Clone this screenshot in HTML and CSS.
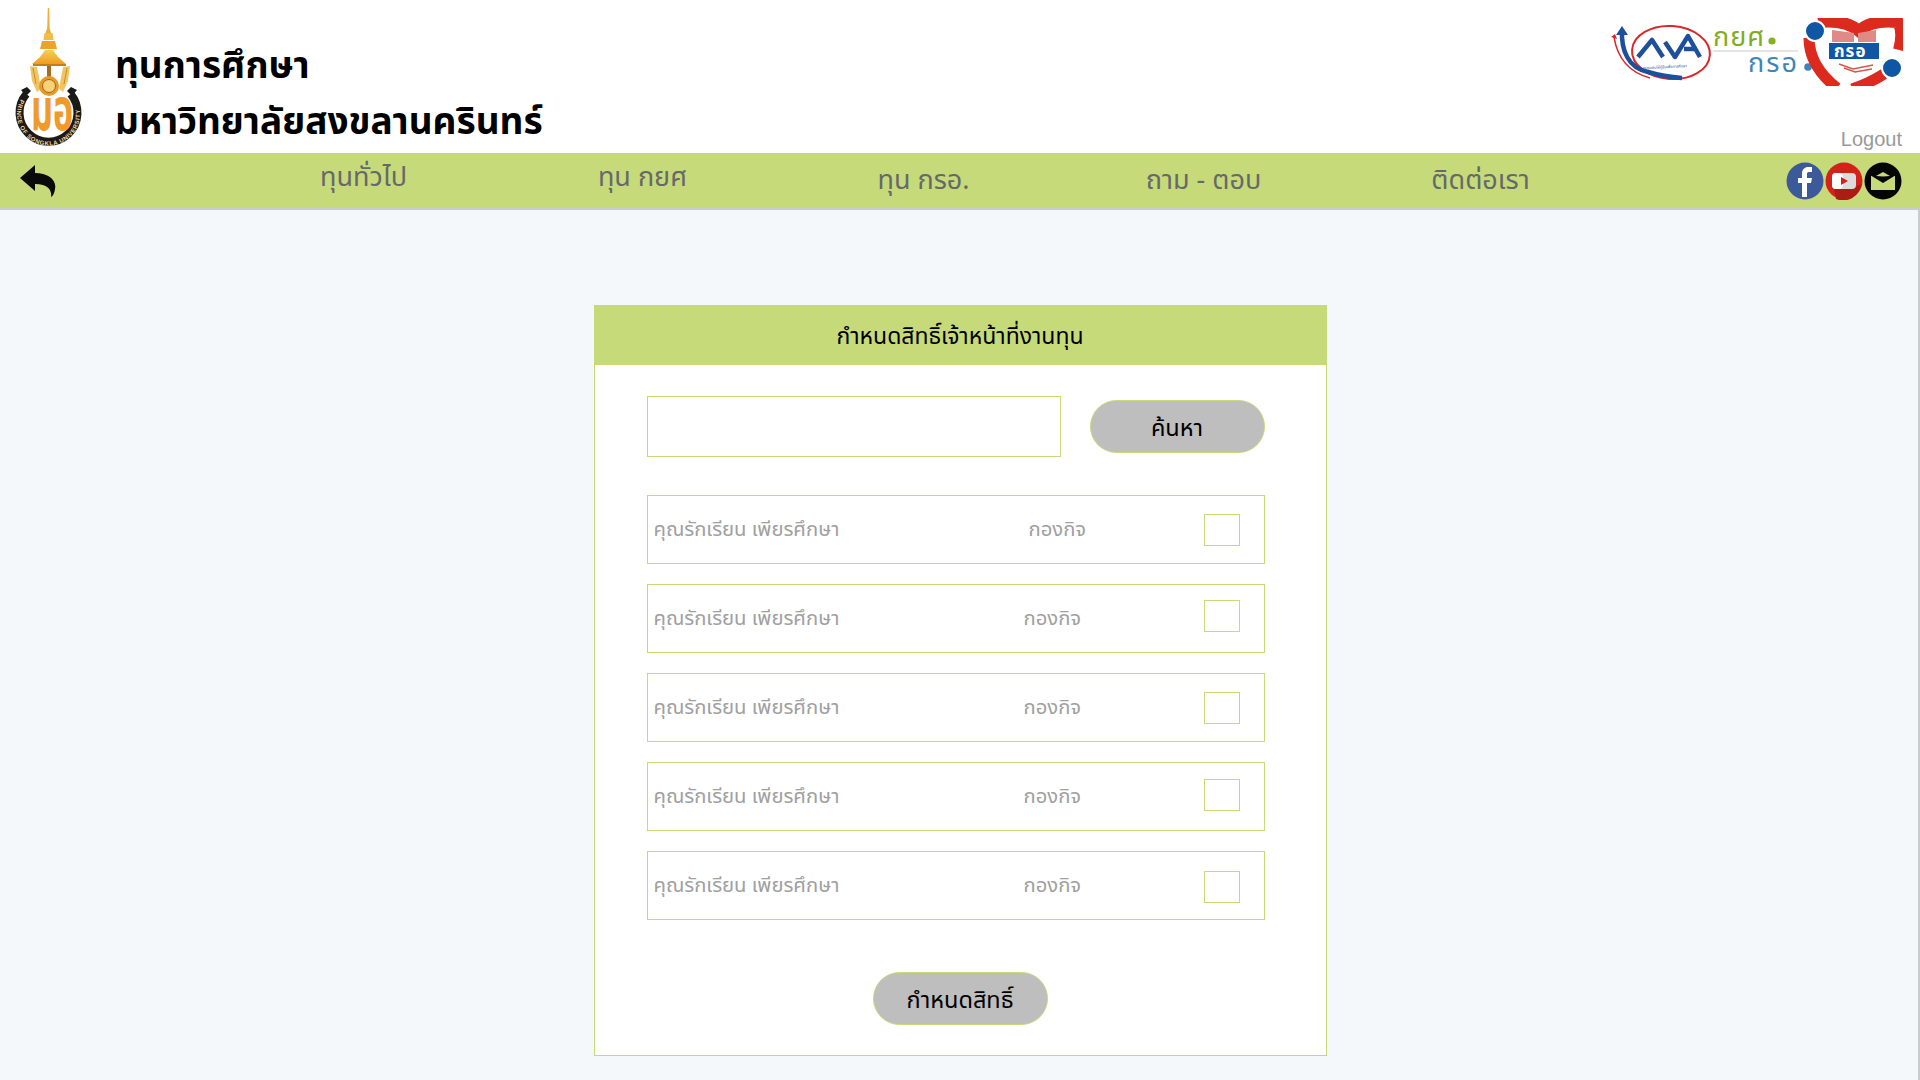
FILE: index.html
```html
<!DOCTYPE html>
<html lang="th">
<head>
<meta charset="utf-8">
<title>ทุนการศึกษา</title>
<link rel="stylesheet" href="styles.css">
</head>
<body>
<header class="top">
  <svg class="crest" viewBox="0 0 100 152" width="100" height="152" aria-hidden="true">
    <defs>
      <linearGradient id="gold" x1="0" y1="0" x2="0" y2="1"><stop offset="0" stop-color="#f7cf5a"/><stop offset="1" stop-color="#ef9d1e"/></linearGradient>
      <path id="ringArc" d="M22 97 A31.500 31.500 0 1 0 75 97"/>
    </defs>
    <path d="M47.800 8h1.400l.5 20 1.500 6 1 6h-8l1-6 2-6z" fill="#eab040"/>
    <path d="M44.500 33h8l1 7h-10z" fill="#f2bd44"/>
    <path d="M42 41h13l2 8H40z" fill="#e9a42a"/>
    <path d="M45 50h8l5 7 8 7H32l8-7z" fill="url(#gold)"/>
    <rect x="33" y="64" width="33" height="2" fill="#c77d18"/>
    <path d="M30 66l7 1 2 10 2 12-4 3-5-11zM70 66l-7 1-2 10-2 12 4 3 5-11z" fill="#f0c665"/>
    <path d="M33 68l3 16M67 68l-3 16" stroke="#c98a2a" fill="none"/>
    <rect x="47" y="66" width="4" height="11" fill="#a96c1c"/>
    <circle cx="49" cy="86" r="10" fill="#e89a24"/>
    <circle cx="49" cy="86" r="6.500" fill="#f6d27a" stroke="#a9641a"/>
    <path d="M26.300 94 A29 29 0 1 0 70.700 94" fill="none" stroke="#1b1a17" stroke-width="8"/>
    <path d="M21 90l6-3 4 4-5 5zM77 90l-6-3-4 4 5 5z" fill="#1b1a17"/>
    <text class="ring-text"><textPath href="#ringArc" startOffset="2%">PRINCE OF SONGKLA UNIVERSITY</textPath></text>
    <text class="crest-mark" transform="translate(31 130) scale(1 1.700)">มอ</text>
  </svg>
  <h1 class="brand">ทุนการศึกษา<br>มหาวิทยาลัยสงขลานครินทร์</h1>
  <div class="top-right">
    <svg class="partners" viewBox="0 0 293 68" width="293" height="68" aria-hidden="true">
      <g fill="none">
        <ellipse cx="61" cy="34.500" rx="39" ry="26.500" stroke="#d9282a" stroke-width="2" transform="rotate(4 61 34)"/>
        <path d="M12 12C11 32 18 50 38 54C48 57 58 59 72 60" stroke="#1d4f9c" stroke-width="4.500"/>
        <path d="M4 19C7 38 18 54 40 60" stroke="#d9282a" stroke-width="1.600"/>
        <path d="M28 39L42 22L53 39M55 24L65 39L78 18L90 39M74 31H87" stroke="#1d4f9c" stroke-width="4.500" stroke-linejoin="round"/>
      </g>
      <path d="M12 8l6 9h-12z" fill="#1d4f9c"/>
      <path d="M1 19l4-3 2 5z" fill="#d9282a"/>
      <text class="fund-small" x="30" y="50" transform="rotate(-3 60 48)">กองทุนเงินให้กู้ยืมเพื่อการศึกษา</text>
      <text class="mark-green" x="103" y="28">กยศ</text>
      <circle cx="162" cy="23" r="3.600" fill="#86b020"/>
      <rect x="103" y="32" width="85" height="2" fill="#e3e5e5"/>
      <text class="mark-blue" x="138" y="54">กรอ</text>
      <circle cx="198" cy="49" r="3.800" fill="#3f86b8"/>
      <g fill="none" stroke="#dc2a1e" stroke-width="12">
        <path d="M208 4Q235 1 249 13Q262 1 288 4Q294 14 289 32"/>
      </g>
      <g fill="none" stroke="#dc2a1e" stroke-width="11">
        <path d="M199 20Q199 48 227 70"/>
        <path d="M274 56Q258 66 242 71"/>
      </g>
      <path d="M222 12l22 3v9h-22zM248 15l18-3v12h-18z" fill="#e08a85"/>
      <rect x="219" y="25" width="50" height="16" fill="#0f56a5"/>
      <text class="mark-inner" x="224" y="39">กรอ</text>
      <path d="M229 46l14 5 20-4M234 50l11 4 17-3" fill="none" stroke="#d9564a" stroke-width="1.400"/>
      <circle cx="205" cy="13" r="10" fill="#0f56a5" stroke="#fff" stroke-width="2"/>
      <circle cx="282" cy="50" r="10" fill="#0f56a5" stroke="#fff" stroke-width="2"/>
    </svg>
    <a class="logout">Logout</a>
  </div>
</header>

<nav class="nav">
  <svg class="back" viewBox="0 0 36 32" width="36" height="32" aria-hidden="true">
    <path d="M0 13L15 0V8C28 8 37 15 35 24C34.500 28 33 31 31 32C32 26 29 19 15 19V26z" fill="#0a0a0a"/>
  </svg>
  <ul class="links">
    <li class="link raised">ทุนทั่วไป</li>
    <li class="link raised">ทุน กยศ</li>
    <li class="link">ทุน กรอ.</li>
    <li class="link">ถาม - ตอบ</li>
    <li class="link">ติดต่อเรา</li>
  </ul>
  <div class="social">
    <svg viewBox="0 0 38 38" width="38" height="38" aria-hidden="true">
      <circle cx="19" cy="19" r="18.500" fill="#3c5a9a"/>
      <path d="M16 35V21h-4v-5h4v-4c0-5 3-7 6-7h4v5h-3c-1.500 0-2 .7-2 2v4h5l-1 5h-4v14z" fill="#fff"/>
    </svg>
    <svg viewBox="0 0 38 38" width="38" height="38" aria-hidden="true">
      <circle cx="19" cy="19" r="18.500" fill="#d2221c"/>
      <path d="M9 26h20l7-4a18 18 0 0 1-25 15z" fill="#ab1c16"/>
      <rect x="7" y="11" width="24" height="16" rx="4" fill="#dcdcdc"/>
      <rect x="7" y="11" width="11" height="16" rx="4" fill="#fff"/>
      <path d="M16 15l7 4-7 4z" fill="#d2221c"/>
    </svg>
    <svg viewBox="0 0 38 38" width="38" height="38" aria-hidden="true">
      <circle cx="19" cy="19" r="18.500" fill="#050505"/>
      <path d="M7 14L19 7l12 7v14H7z" fill="#c7da79"/>
      <path d="M6 13L19 6l13 7-13 8z" fill="#050505"/>
      <path d="M12 14l7-4 7 4-7 .5z" fill="#c7da79"/>
    </svg>
  </div>
</nav>

<main class="page">
  <section class="card">
    <h2 class="card-title">กำหนดสิทธิ์เจ้าหน้าที่งานทุน</h2>
    <div class="card-body">
      <div class="search">
        <input class="search-box" type="text" aria-label="ค้นหา">
        <button class="pill" type="button">ค้นหา</button>
      </div>
      <div class="row">
        <span class="name">คุณรักเรียน เพียรศึกษา</span>
        <span class="unit first">กองกิจ</span>
        <input class="tick" type="checkbox">
      </div>
      <div class="row high">
        <span class="name">คุณรักเรียน เพียรศึกษา</span>
        <span class="unit">กองกิจ</span>
        <input class="tick" type="checkbox">
      </div>
      <div class="row">
        <span class="name">คุณรักเรียน เพียรศึกษา</span>
        <span class="unit">กองกิจ</span>
        <input class="tick" type="checkbox">
      </div>
      <div class="row mid">
        <span class="name">คุณรักเรียน เพียรศึกษา</span>
        <span class="unit">กองกิจ</span>
        <input class="tick" type="checkbox">
      </div>
      <div class="row low">
        <span class="name">คุณรักเรียน เพียรศึกษา</span>
        <span class="unit">กองกิจ</span>
        <input class="tick" type="checkbox">
      </div>
      <div class="actions">
        <button class="pill" type="button">กำหนดสิทธิ์</button>
      </div>
    </div>
  </section>
</main>
</body>
</html>
```

FILE: styles.css
```css
* { box-sizing: border-box; }
html, body { margin: 0; padding: 0; }
body {
  background: #f4f8fb;
  font-family: "Noto Sans Thai", "Liberation Sans", "Noto Sans", sans-serif;
  color: #000;
  overflow: hidden;
}
.top {
  height: 153px;
  background: #fff;
  display: flex;
  align-items: flex-start;
}
.crest { flex: none; display: block; margin-right: 15px; }
.ring-text { font: bold 6px "Liberation Sans", sans-serif; fill: #f3d9a0; letter-spacing: .6px; }
.crest-mark { font-size: 34px; font-weight: 700; fill: #ef9a2a; }
.brand {
  margin: 39px 0 0;
  font-size: 37px;
  line-height: 56px;
  font-weight: 700;
}
.top-right {
  margin-left: auto;
  padding: 18px 18px 0 0;
  display: flex;
  flex-direction: column;
  align-items: flex-end;
}
.partners { display: block; margin-right: -1px; }
.fund-small { font-size: 3.800px; fill: #1d4f9c; }
.mark-green { font-size: 27px; fill: #83ab1f; letter-spacing: 1px; }
.mark-blue { font-size: 27px; fill: #3f86b8; letter-spacing: 2px; }
.mark-inner { font-size: 17px; font-weight: 700; fill: #fff; letter-spacing: 1px; }
.logout {
  margin-top: 40px;
  font: 20px/26px "Liberation Sans", sans-serif;
  color: #999;
}
.nav {
  height: 57px;
  background: #c7da79;
  border-bottom: 2px solid #c9ccce;
  display: flex;
  align-items: center;
  padding: 0 18px 0 20px;
}
.back { flex: none; display: block; }
.links {
  list-style: none;
  margin: 0 0 0 168px;
  padding: 0;
  display: grid;
  grid-template-columns: 279px 279px 283px 277px 277px;
}
.link {
  text-align: center;
  font-size: 27px;
  line-height: 40px;
  padding-top: 1px;
  color: #66696b;
}
.raised { margin-top: -3px; }
.social { margin-left: auto; display: flex; gap: 1px; }
.social svg { display: block; }

.page {
  height: 870px;
  padding-top: 95px;
  border-right: 2px solid #c9ccce;
  display: flex;
  justify-content: center;
}
.card {
  width: 733px;
  height: 751px;
  margin-left: 2px;
  background: #fff;
  border: 1px solid #c7da79;
}
.card-title {
  margin: 0;
  height: 59px;
  background: #c7da79;
  text-align: center;
  font-size: 23px;
  line-height: 63px;
  font-weight: 400;
}
.card-body { padding: 31px 0 0 52px; }
.search { display: flex; align-items: center; gap: 29px; margin-bottom: 38px; width: 618px; }
.search-box {
  width: 414px;
  height: 61px;
  border: 1px solid #c7da79;
  background: #fff;
  padding: 0 8px;
}
.pill {
  width: 175px;
  height: 53px;
  padding: 6px 0 0;
  border: 1px solid #c7da79;
  border-radius: 27px;
  background: #bebebe;
  font: 400 23.500px/1 "Noto Sans Thai", "Liberation Sans", sans-serif;
  color: #000;
}
.row {
  width: 618px;
  height: 69px;
  margin-bottom: 20px;
  padding: 0 24px 0 6px;
  border: 1px solid #c7da79;
  display: flex;
  align-items: center;
  font-size: 20.250px;
  color: #a0a0a0;
}
.name { width: 370px; flex: none; }
.unit.first { margin-left: 5px; }
.tick {
  appearance: none;
  -webkit-appearance: none;
  align-self: flex-start;
  margin: 18px 0 0 auto;
  width: 36px;
  height: 32px;
  border: 1px solid #c7da79;
  background: #fff;
}
.row.high .tick { margin-top: 15px; }
.row.mid .tick { margin-top: 16px; }
.row.low .tick { margin-top: 19px; }
.actions { padding: 32px 0 0 226px; }
```
